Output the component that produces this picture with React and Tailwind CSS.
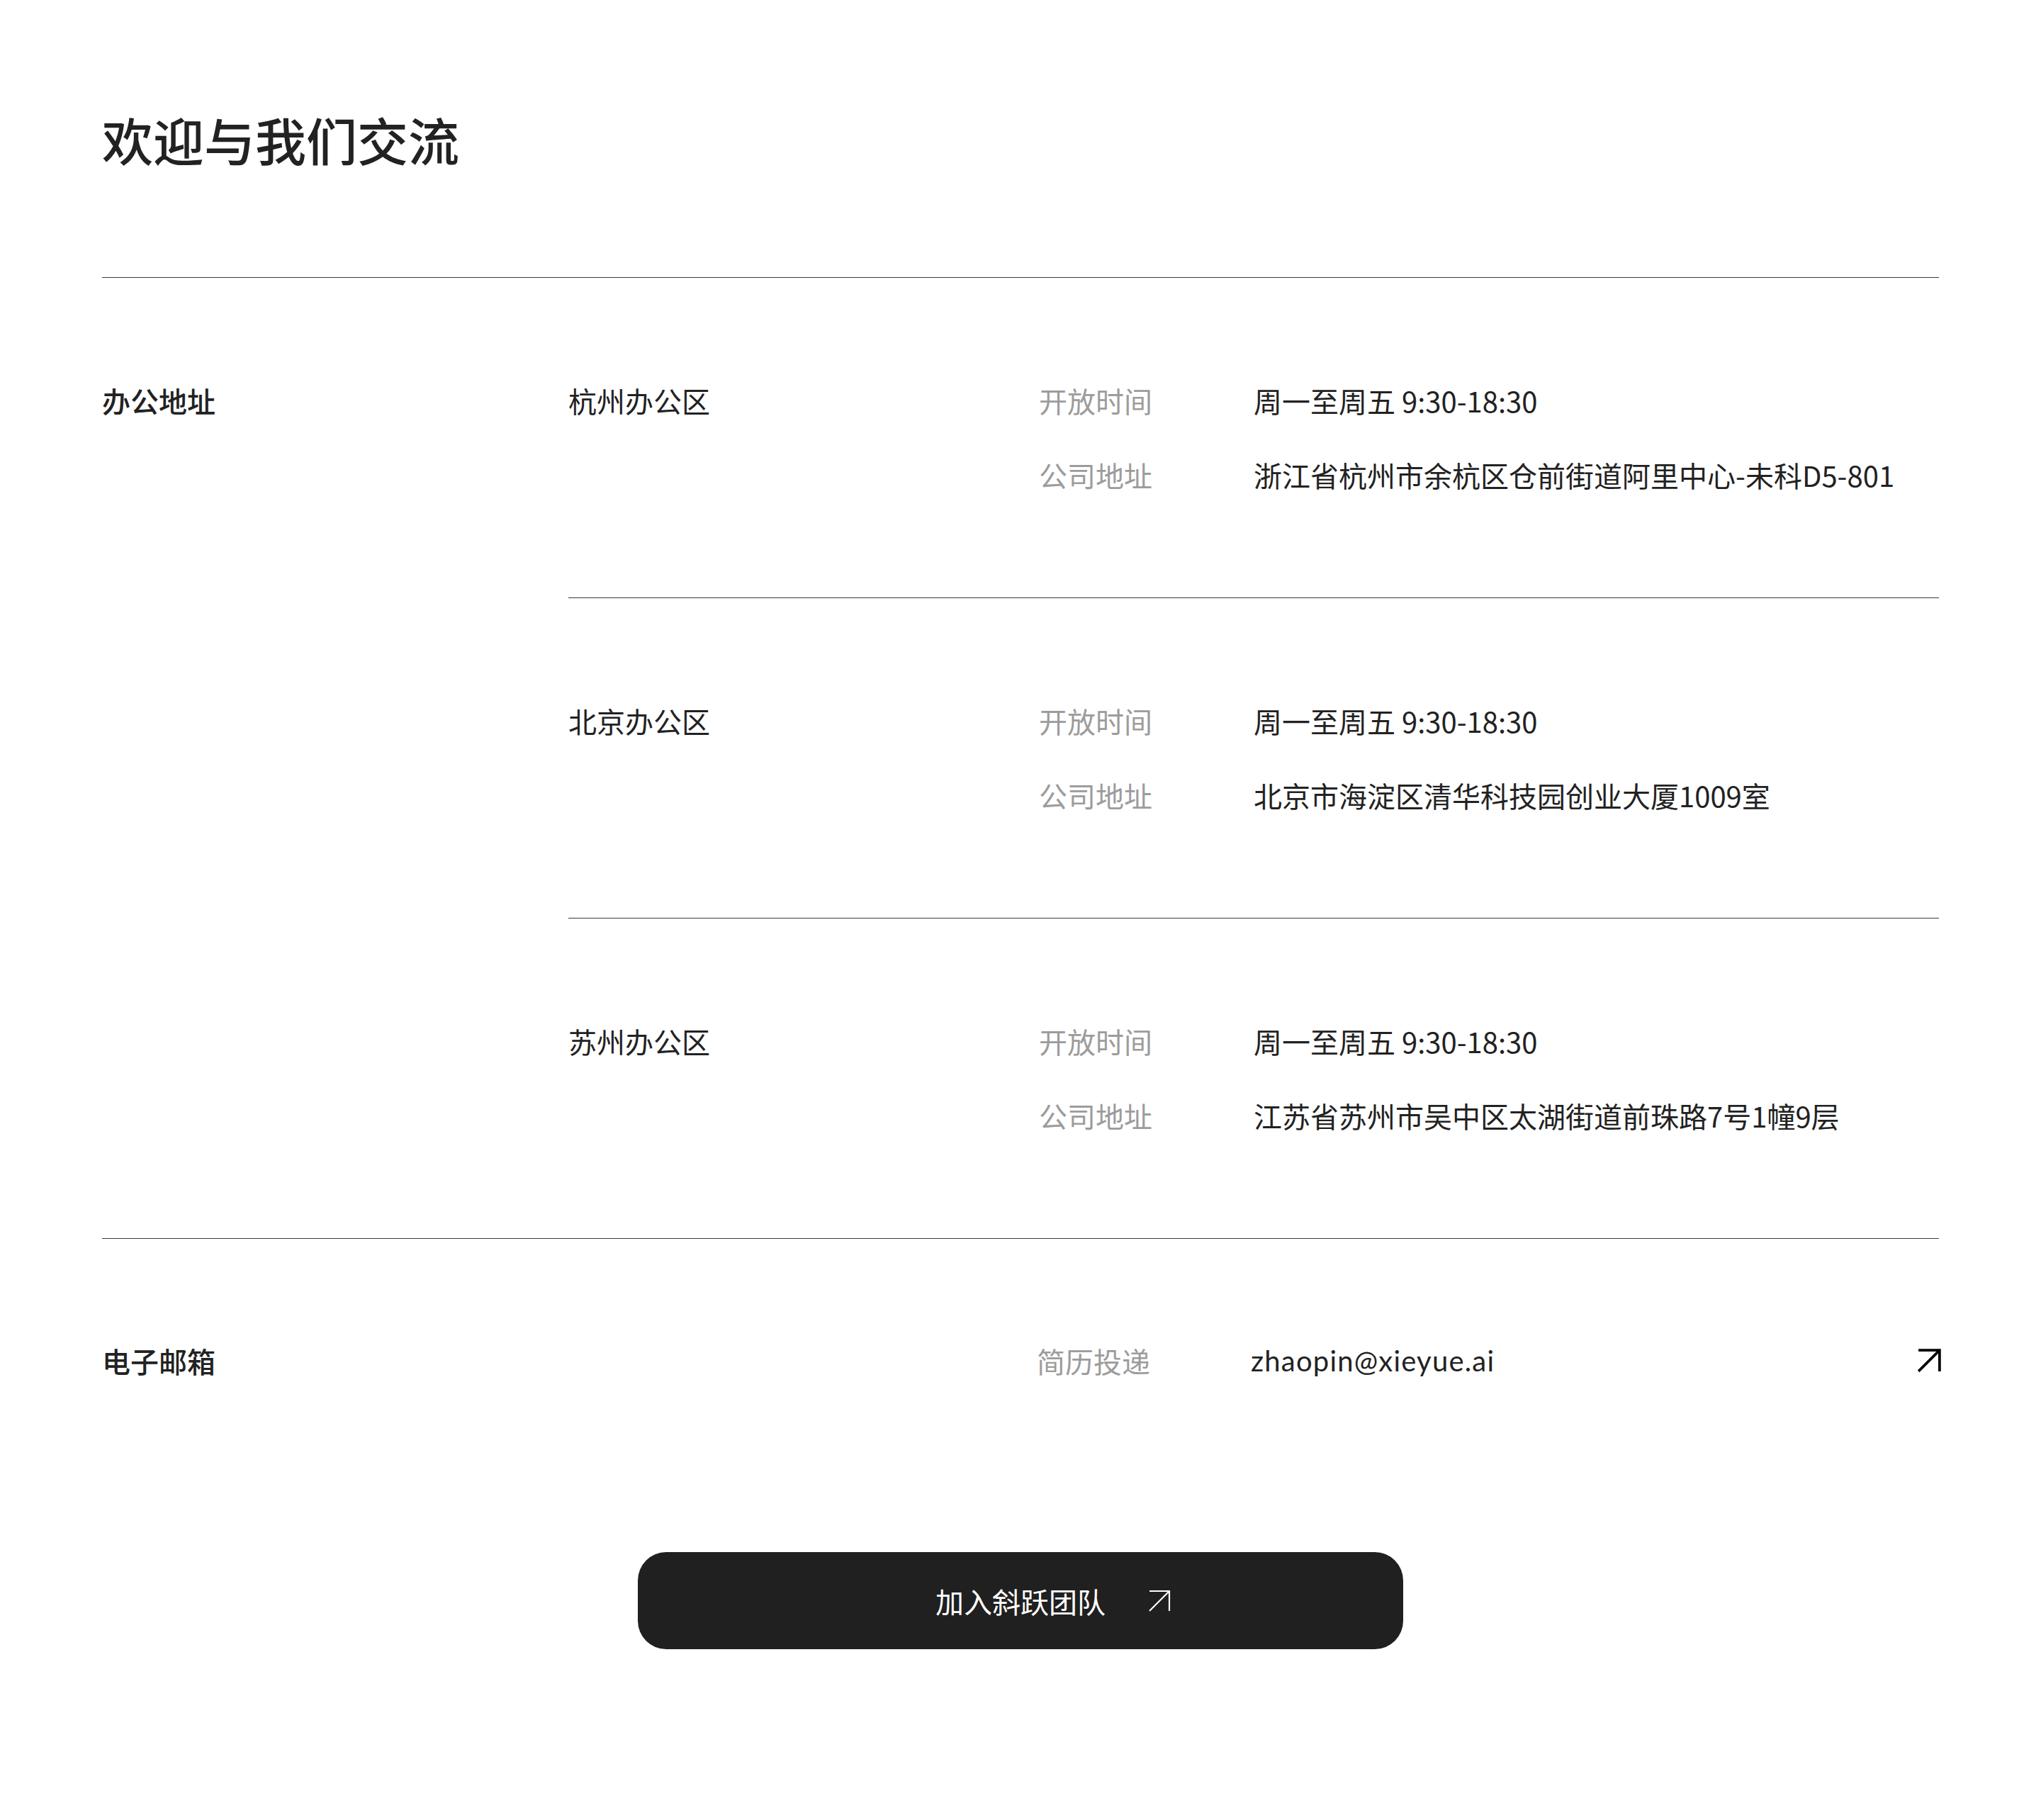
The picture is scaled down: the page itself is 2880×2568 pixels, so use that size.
import React from "react";

const offices = [
  {
    name: "杭州办公区",
    hours: "周一至周五 9:30-18:30",
    address: "浙江省杭州市余杭区仓前街道阿里中心-未科D5-801",
  },
  {
    name: "北京办公区",
    hours: "周一至周五 9:30-18:30",
    address: "北京市海淀区清华科技园创业大厦1009室",
  },
  {
    name: "苏州办公区",
    hours: "周一至周五 9:30-18:30",
    address: "江苏省苏州市吴中区太湖街道前珠路7号1幢9层",
  },
];

function ArrowUpRight({ className, strokeWidth = 2 }) {
  return (
    <svg
      className={className}
      viewBox="0 0 32 32"
      fill="none"
      stroke="currentColor"
      strokeWidth={strokeWidth}
      strokeLinecap="butt"
    >
      <path d="M2 30 L30 2" />
      <path d="M2 2 H30 V30" />
    </svg>
  );
}

function InfoLine({ label, value }) {
  return (
    <div className="flex leading-[60px]">
      <div className="w-[303px] shrink-0 text-[#9c9c9c]">{label}</div>
      <div className="text-[#222222]">{value}</div>
    </div>
  );
}

export default function App() {
  return (
    <div className="min-h-[2568px] bg-white px-[144px] pb-[241px] font-['Noto_Sans_CJK_SC','Noto_Sans',sans-serif] text-[40px] text-[#222222]">
      <h1 className="pt-[153px] text-[72px] font-medium leading-[86px] text-[#222222]">
        欢迎与我们交流
      </h1>

      {/* Offices */}
      <section className="mt-[152px] flex border-y border-[#3a3a3a]">
        <div className="w-[658px] shrink-0 pt-[143px] font-medium leading-[60px]">
          办公地址
        </div>
        <div className="flex-1">
          {offices.map((o, i) => (
            <div
              key={o.name}
              className={
                i < offices.length - 1
                  ? "flex border-b border-[#3a3a3a] pt-[143px] pb-[143px]"
                  : "flex pt-[143px] pb-[143px]"
              }
            >
              <div className="w-[664px] shrink-0 leading-[60px]">{o.name}</div>
              <div className="flex flex-col gap-[45px]">
                <InfoLine label="开放时间" value={o.hours} />
                <InfoLine label="公司地址" value={o.address} />
              </div>
            </div>
          ))}
        </div>
      </section>

      {/* Email */}
      <section className="flex items-center pt-[142px] leading-[60px]">
        <div className="w-[658px] shrink-0 font-medium">电子邮箱</div>
        <div className="w-[661px] shrink-0" />
        <div className="w-[302px] shrink-0 text-[#9c9c9c]">简历投递</div>
        <div className="font-['Lato',sans-serif] tracking-[1.2px] text-[#222222]">zhaopin@xieyue.ai</div>
        <ArrowUpRight className="ml-auto -mr-[3px] h-[34px] w-[34px] text-black" strokeWidth={3.5} />
      </section>

      {/* Join button */}
      <div className="mt-[240px] flex justify-center">
        <button className="flex h-[137px] w-[1080px] items-center justify-center rounded-[40px] bg-[#202020] text-white">
          <span className="relative leading-[60px]">
            加入斜跃团队
            <ArrowUpRight className="absolute left-full top-[14px] ml-[60px] h-[32px] w-[32px] text-white" strokeWidth={2.2} />
          </span>
        </button>
      </div>
    </div>
  );
}
